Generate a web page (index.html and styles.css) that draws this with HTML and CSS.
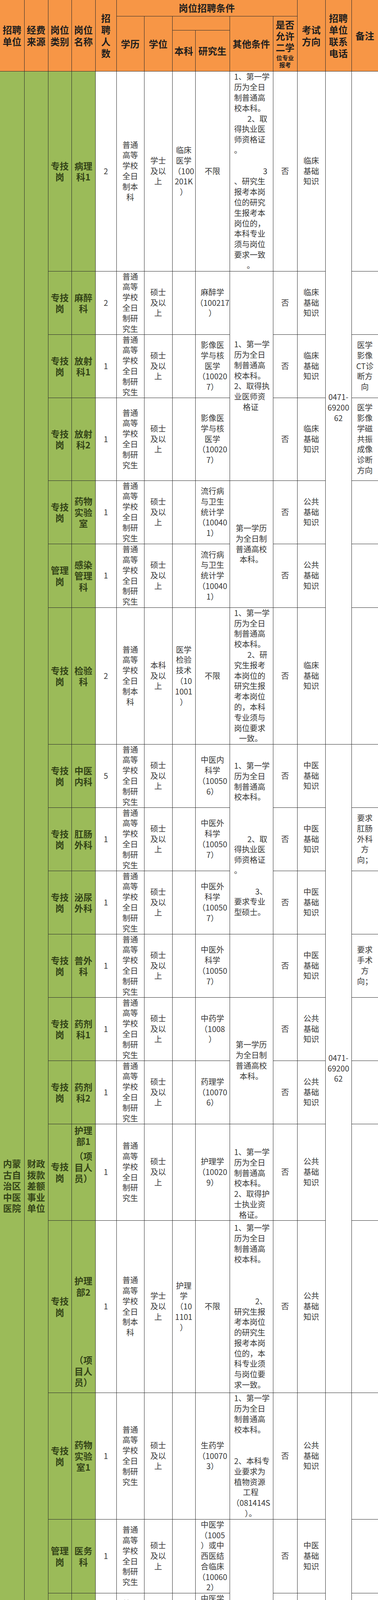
FILE: index.html
```html
<!DOCTYPE html>
<html lang="zh-CN">
<head>
<meta charset="utf-8">
<title>岗位招聘条件</title>
<link rel="stylesheet" href="styles.css">
</head>
<body>
<table class="tbl">
<colgroup>
<col class="w62"><col class="w61"><col class="w60"><col class="w61"><col class="w54"><col class="w71"><col class="w72"><col class="w59"><col class="w88"><col class="w111"><col class="w62"><col class="w72"><col class="w67"><col class="w68">
</colgroup>
<thead>
<tr class="h41">
<th rowspan="3" class="el">招聘<br>单位</th>
<th rowspan="3">经费<br>来源</th>
<th rowspan="3">岗位<br>类别</th>
<th rowspan="3">岗位<br>名称</th>
<th rowspan="3">招<br>聘<br>人<br>数</th>
<th colspan="6">岗位招聘条件</th>
<th rowspan="3">考试<br>方向</th>
<th rowspan="3">招聘<br>单位<br>联系<br>电话</th>
<th rowspan="3" class="er">备注</th>
</tr>
<tr class="h36">
<th rowspan="2">学历</th>
<th rowspan="2">学位</th>
<th colspan="2"></th>
<th rowspan="2">其他条件</th>
<th rowspan="2" class="yn">是否<br>允许<br>二学<div class="sm">位专业<br>报考</div></th>
</tr>
<tr class="h105"><th>本科</th><th>研究生</th></tr>
</thead>
<tbody>
<!-- R1 -->
<tr class="h512">
<td class="g unit el" rowspan="27">内蒙<br>古自<br>治区<br>中医<br>医院</td>
<td class="g unit" rowspan="27">财政<br>拨款<br>差额<br>事业<br>单位</td>
<td class="g">专技<br>岗</td>
<td class="g">病理<br>科1</td>
<td>2</td>
<td>普通<br>高等<br>学校<br>全日<br>制本<br>科</td>
<td>学士<br>及以<br>上</td>
<td>临床<br>医学<br>（100<br>201K<br>）</td>
<td>不限</td>
<td class="oc"><div>1、第一学</div><div>历为全日</div><div>制普通高</div><div>校本科。</div><div class="r">2、取</div><div>得执业医</div><div>师资格证</div><div>。</div><div class="b"></div><div class="r">3</div><div>、研究生</div><div>报考本岗</div><div>位的研究</div><div>生报考本</div><div>岗位的，</div><div>本科专业</div><div>须与岗位</div><div>要求一致</div><div class="c">。</div></td>
<td>否</td>
<td>临床<br>基础<br>知识</td>
<td class="tel" rowspan="7">0471-<br>69200<br>62</td>
<td></td>
</tr>
<!-- R2 -->
<tr class="h162">
<td class="g">专技<br>岗</td>
<td class="g">麻醉<br>科</td>
<td>2</td>
<td>普通<br>高等<br>学校<br>全日<br>制研<br>究生</td>
<td>硕士<br>及以<br>上</td>
<td></td>
<td>麻醉学<br>（100217<br>）</td>
<td class="oc" rowspan="3"><div>1、第一学</div><div>历为全日</div><div>制普通高</div><div>校本科。</div><div>2、取得执</div><div>业医师资</div><div class="c">格证</div></td>
<td>否</td>
<td>临床<br>基础<br>知识</td>
<td></td>
</tr>
<!-- R3 -->
<tr class="h162">
<td class="g">专技<br>岗</td>
<td class="g">放射<br>科1</td>
<td>1</td>
<td>普通<br>高等<br>学校<br>全日<br>制研<br>究生</td>
<td>硕士<br>及以<br>上</td>
<td></td>
<td>影像医<br>学与核<br>医学<br>（10020<br>7）</td>
<td>否</td>
<td>临床<br>基础<br>知识</td>
<td>医学<br>影像<br>CT诊<br>断方<br>向</td>
</tr>
<!-- R4 -->
<tr class="h212">
<td class="g">专技<br>岗</td>
<td class="g">放射<br>科2</td>
<td>1</td>
<td>普通<br>高等<br>学校<br>全日<br>制研<br>究生</td>
<td>硕士<br>及以<br>上</td>
<td></td>
<td>影像医<br>学与核<br>医学<br>（10020<br>7）</td>
<td>否</td>
<td>临床<br>基础<br>知识</td>
<td>医学<br>影像<br>学磁<br>共振<br>成像<br>诊断<br>方向</td>
</tr>
<!-- R5 -->
<tr class="h162">
<td class="g">专技<br>岗</td>
<td class="g">药物<br>实验<br>室</td>
<td>1</td>
<td>普通<br>高等<br>学校<br>全日<br>制研<br>究生</td>
<td>硕士<br>及以<br>上</td>
<td></td>
<td>流行病<br>与卫生<br>统计学<br>（10040<br>1）</td>
<td class="oc cc" rowspan="2">第一学历<br>为全日制<br>普通高校<br>本科。</td>
<td>否</td>
<td>公共<br>基础<br>知识</td>
<td></td>
</tr>
<!-- R6 -->
<tr class="h163">
<td class="g">管理<br>岗</td>
<td class="g">感染<br>管理<br>科</td>
<td>1</td>
<td>普通<br>高等<br>学校<br>全日<br>制研<br>究生</td>
<td>硕士<br>及以<br>上</td>
<td></td>
<td>流行病<br>与卫生<br>统计学<br>（10040<br>1）</td>
<td>否</td>
<td>公共<br>基础<br>知识</td>
<td></td>
</tr>
<!-- R7 -->
<tr class="h350">
<td class="g">专技<br>岗</td>
<td class="g">检验<br>科</td>
<td>2</td>
<td>普通<br>高等<br>学校<br>全日<br>制本<br>科</td>
<td>本科<br>及以<br>上</td>
<td>医学<br>检验<br>技术<br>（10<br>1001<br>）</td>
<td>不限</td>
<td class="oc"><div>1、第一学</div><div>历为全日</div><div>制普通高</div><div>校本科。</div><div class="r">2、研</div><div>究生报考</div><div>本岗位的</div><div>研究生报</div><div>考本岗位</div><div>的，本科</div><div>专业须与</div><div>岗位要求</div><div class="c">一致。</div></td>
<td>否</td>
<td>临床<br>基础<br>知识</td>
<td></td>
</tr>
<!-- R8 -->
<tr class="h162">
<td class="g">专技<br>岗</td>
<td class="g">中医<br>内科</td>
<td>5</td>
<td>普通<br>高等<br>学校<br>全日<br>制研<br>究生</td>
<td>硕士<br>及以<br>上</td>
<td></td>
<td>中医内<br>科学<br>（10050<br>6）</td>
<td class="oc" rowspan="3"><div>1、第一学</div><div>历为全日</div><div>制普通高</div><div>校本科。</div><div class="b"></div><div class="b"></div><div class="b"></div><div class="r">2、取</div><div>得执业医</div><div>师资格证</div><div>。</div><div class="b"></div><div class="r">3、</div><div>要求专业</div><div>型硕士。</div></td>
<td>否</td>
<td>中医<br>基础<br>知识</td>
<td class="tel" rowspan="8">0471-<br>69200<br>62</td>
<td></td>
</tr>
<!-- R9 -->
<tr class="h162">
<td class="g">专技<br>岗</td>
<td class="g">肛肠<br>外科</td>
<td>1</td>
<td>普通<br>高等<br>学校<br>全日<br>制研<br>究生</td>
<td>硕士<br>及以<br>上</td>
<td></td>
<td>中医外<br>科学<br>（10050<br>7）</td>
<td>否</td>
<td>中医<br>基础<br>知识</td>
<td>要求<br>肛肠<br>外科<br>方<br>向；</td>
</tr>
<!-- R10 -->
<tr class="h162">
<td class="g">专技<br>岗</td>
<td class="g">泌尿<br>外科</td>
<td>1</td>
<td>普通<br>高等<br>学校<br>全日<br>制研<br>究生</td>
<td>硕士<br>及以<br>上</td>
<td></td>
<td>中医外<br>科学<br>（10050<br>7）</td>
<td>否</td>
<td>中医<br>基础<br>知识</td>
<td></td>
</tr>
<!-- R11 -->
<tr class="h162">
<td class="g">专技<br>岗</td>
<td class="g">普外<br>科</td>
<td>1</td>
<td>普通<br>高等<br>学校<br>全日<br>制研<br>究生</td>
<td>硕士<br>及以<br>上</td>
<td></td>
<td>中医外<br>科学<br>（10050<br>7）</td>
<td class="oc"></td>
<td>否</td>
<td>中医<br>基础<br>知识</td>
<td>要求<br>手术<br>方<br>向；</td>
</tr>
<!-- R12 -->
<tr class="h162">
<td class="g">专技<br>岗</td>
<td class="g">药剂<br>科1</td>
<td>1</td>
<td>普通<br>高等<br>学校<br>全日<br>制研<br>究生</td>
<td>硕士<br>及以<br>上</td>
<td></td>
<td>中药学<br>（1008<br>）</td>
<td class="oc cc" rowspan="2">第一学历<br>为全日制<br>普通高校<br>本科。</td>
<td>否</td>
<td>公共<br>基础<br>知识</td>
<td></td>
</tr>
<!-- R13 -->
<tr class="h162">
<td class="g">专技<br>岗</td>
<td class="g">药剂<br>科2</td>
<td>1</td>
<td>普通<br>高等<br>学校<br>全日<br>制研<br>究生</td>
<td>硕士<br>及以<br>上</td>
<td></td>
<td>药理学<br>（10070<br>6）</td>
<td>否</td>
<td>公共<br>基础<br>知识</td>
<td></td>
</tr>
<!-- R14 -->
<tr class="h247">
<td class="g">专技<br>岗</td>
<td class="g top"><div>护理</div><div>部1</div><div class="gapsm">（项</div><div>目人</div><div>员）</div></td>
<td>1</td>
<td>普通<br>高等<br>学校<br>全日<br>制研<br>究生</td>
<td>硕士<br>及以<br>上</td>
<td></td>
<td>护理学<br>（10020<br>9）</td>
<td class="oc bot"><div>1、第一学</div><div>历为全日</div><div>制普通高</div><div>校本科。</div><div>2、取得护</div><div>士执业资</div><div class="c">格证。</div></td>
<td>否</td>
<td>公共<br>基础<br>知识</td>
<td></td>
</tr>
<!-- R15 -->
<tr class="h441">
<td class="g">专技<br>岗</td>
<td class="g bot pb14"><div>护理</div><div>部2</div><div class="gaplg"></div><div>（项</div><div>目人</div><div>员）</div></td>
<td>1</td>
<td>普通<br>高等<br>学校<br>全日<br>制本<br>科</td>
<td>学士<br>及以<br>上</td>
<td>护理<br>学<br>（10<br>1101<br>）</td>
<td>不限</td>
<td class="oc"><div>1、第一学</div><div>历为全日</div><div>制普通高</div><div>校本科。</div><div class="b"></div><div class="b"></div><div class="b"></div><div class="r">2、</div><div>研究生报</div><div>考本岗位</div><div>的研究生</div><div>报考本岗</div><div>位的，本</div><div>科专业须</div><div>与岗位要</div><div>求一致。</div></td>
<td>否</td>
<td>公共<br>基础<br>知识</td>
<td></td>
</tr>
<!-- R16 -->
<tr class="h324">
<td class="g">专技<br>岗</td>
<td class="g">药物<br>实验<br>室1</td>
<td>1</td>
<td>普通<br>高等<br>学校<br>全日<br>制研<br>究生</td>
<td>硕士<br>及以<br>上</td>
<td></td>
<td>生药学<br>（10070<br>3）</td>
<td class="oc"><div>1、第一学</div><div>历为全日</div><div>制普通高</div><div>校本科。</div><div class="b"></div><div class="b"></div><div>2、本科专</div><div>业要求为</div><div>植物资源</div><div class="c">工程</div><div class="code">（081414S</div><div class="c">）。</div></td>
<td>否</td>
<td>公共<br>基础<br>知识</td>
<td class="tel" rowspan="6">0471-<br>69200<br>62</td>
<td></td>
</tr>
<!-- R17 -->
<tr class="h189">
<td class="g">管理<br>岗</td>
<td class="g">医务<br>科</td>
<td>1</td>
<td>普通<br>高等<br>学校<br>全日<br>制研<br>究生</td>
<td>硕士<br>及以<br>上</td>
<td></td>
<td>中医学<br>（1005<br>）或中<br>西医结<br>合临床<br>（10060<br>2）</td>
<td class="oc cc" rowspan="5">第一学历<br>为全日制<br>普通高校<br>本科。</td>
<td>否</td>
<td>中医<br>基础<br>知识</td>
<td></td>
</tr>
<!-- R18 -->
<tr class="h189">
<td class="g">管理<br>岗</td>
<td class="g">医务<br>科<br>（项<br>目人<br>员）</td>
<td>2</td>
<td>普通<br>高等<br>学校<br>全日<br>制研<br>究生</td>
<td>硕士<br>及以<br>上</td>
<td></td>
<td>中医学<br>（1005<br>）或中<br>西医结<br>合临床<br>（10060<br>2）</td>
<td>否</td>
<td>中医<br>基础<br>知识</td>
<td></td>
</tr>
<!-- R19 -->
<tr class="h162">
<td class="g">管理<br>岗</td>
<td class="g">财务<br>科<br>（项<br>目人<br>员）</td>
<td>1</td>
<td>普通<br>高等<br>学校<br>全日<br>制研<br>究生</td>
<td>硕士<br>及以<br>上</td>
<td></td>
<td>会计学<br>（12020<br>1）</td>
<td>否</td>
<td>公共<br>基础<br>知识</td>
<td></td>
</tr>
<!-- R20 -->
<tr class="h378">
<td class="g">管理<br>岗</td>
<td class="g">党委<br>办公<br>室<br>（项<br>目人<br>员）</td>
<td>1</td>
<td>普通<br>高等<br>学校<br>全日<br>制研<br>究生</td>
<td>硕士<br>及以<br>上</td>
<td></td>
<td class="lst"><div>汉语言</div><div>文字学</div><div>（05010</div><div>3）；马</div><div>克思主</div><div>义哲学</div><div>（01010</div><div>1）；</div><div class="b"></div><div class="b"></div><div class="r">行政</div><div>管理</div><div>（12040</div><div>1）</div></td>
<td>否</td>
<td>公共<br>基础<br>知识</td>
<td>中共<br>党员</td>
</tr>
<!-- R21 -->
<tr class="h162">
<td class="g">管理<br>岗</td>
<td class="g">编辑<br>部<br>（项<br>目人<br>员）</td>
<td>1</td>
<td>普通<br>高等<br>学校<br>全日<br>制研<br>究生</td>
<td>硕士<br>及以<br>上</td>
<td></td>
<td>中医医<br>史文献<br>（10050<br>3）</td>
<td>否</td>
<td>公共<br>基础<br>知识</td>
<td></td>
</tr>
<!-- R22 -->
<tr class="h127">
<td class="g">专技<br>岗</td>
<td class="g">普外<br>科</td>
<td>1</td>
<td class="top"><div class="clip">普通<br>高等<br>学校<br>全日<br>制研<br>究生</div></td>
<td>硕士<br>及以<br>上</td>
<td></td>
<td>外科学<br>（10021<br>0）</td>
<td class="oc" rowspan="4"><div>1、第一学</div><div>历为全日</div><div>制普通高</div><div>校本科。</div><div class="r">2、取</div><div>得执业医</div><div>师资格证</div><div>。</div><div class="b"></div><div class="r">3</div><div>、研究生</div><div>报考本岗</div><div>位的研究</div><div>生报考本</div><div>岗位的，</div><div>本科专业</div><div>须与岗位</div><div>要求一致</div><div>。<span class="sp"></span>4、</div><div>要求专业</div><div class="c">型硕士</div></td>
<td>否</td>
<td>临床<br>基础<br>知识</td>
<td class="tel" rowspan="6">0471-<br>69200<br>62</td>
<td></td>
</tr>
<!-- R23 -->
<tr class="h107">
<td class="g">专技<br>岗</td>
<td class="g">中医<br>内科</td>
<td>1</td>
<td>博士<br>研究<br>生</td>
<td>博士<br>研究<br>生</td>
<td></td>
<td class="tight">中医内<br>科学<br>（10050<br>6）</td>
<td>否</td>
<td></td>
<td>脑病<br>方<br>向；</td>
</tr>
<!-- R24 -->
<tr class="h220">
<td class="g">专技<br>岗</td>
<td class="g">肛肠<br>外科</td>
<td>1</td>
<td>博士<br>研究<br>生</td>
<td>博士<br>研究<br>生</td>
<td></td>
<td>中医外<br>科学<br>（10050<br>7）中西<br>医结合<br>临床<br>（10060<br>2）</td>
<td>否</td>
<td></td>
<td></td>
</tr>
<!-- R25 -->
<tr class="h130">
<td class="g">专技<br>岗</td>
<td class="g">中医<br>妇科</td>
<td>1</td>
<td>博士<br>研究<br>生</td>
<td>博士<br>研究<br>生</td>
<td></td>
<td>中医妇<br>科学<br>（10050<br>9）</td>
<td>否</td>
<td></td>
<td></td>
</tr>
<!-- R26 -->
<tr class="h169">
<td class="g">专技<br>岗</td>
<td class="g">病理<br>科2</td>
<td>1</td>
<td>普通<br>高等<br>学校<br>全日<br>制研<br>究生</td>
<td>硕士<br>及以<br>上</td>
<td></td>
<td>病理学<br>与病理<br>生理学<br>（10010<br>4）</td>
<td class="oc"></td>
<td>否</td>
<td>临床<br>基础<br>知识</td>
<td></td>
</tr>
<!-- R27 -->
<tr class="h167">
<td class="g">管理<br>岗</td>
<td class="g">营养<br>科</td>
<td>1</td>
<td>普通<br>高等<br>学校<br>全日<br>制研<br>究生</td>
<td>硕士<br>及以<br>上</td>
<td></td>
<td>营养与<br>食品卫<br>生学<br>（10040<br>3）</td>
<td class="oc"></td>
<td>否</td>
<td>公共<br>基础<br>知识</td>
<td></td>
</tr>
</tbody>
</table>
</body>
</html>
```

FILE: styles.css
```css
html, body {
  margin: 0;
  padding: 0;
  background: #ffffff;
}

body {
  font-family: "Noto Sans CJK SC", "Noto Sans", sans-serif;
  color: #383838;
}

.tbl {
  border-collapse: collapse;
  table-layout: fixed;
  width: 968px;
}

.w62 { width: 62px; }
.w61 { width: 61px; }
.w60 { width: 60px; }
.w54 { width: 54px; }
.w71 { width: 71px; }
.w72 { width: 72px; }
.w59 { width: 59px; }
.w88 { width: 88px; }
.w111 { width: 111px; }
.w67 { width: 67px; }
.w68 { width: 68px; }

.tbl th,
.tbl td {
  border: 1px solid #2b2b2b;
  padding: 0;
  text-align: center;
  vertical-align: middle;
  white-space: nowrap;
}

/* outer edges: no frame on top, left and right */
.tbl thead tr:first-child th { border-top: none; }
.tbl .el { border-left: none; }
.tbl .er,
.tbl tbody td:last-child { border-right: none; }

.tbl th {
  background: #f79646;
  color: #1e1e1e;
  font-size: 24px;
  font-weight: 700;
  line-height: 30px;
}

.tbl th.yn {
  line-height: 29px;
}

.tbl th .sm {
  font-size: 15px;
  line-height: 18px;
  padding-top: 4px;
}

.tbl td {
  font-size: 20px;
  line-height: 26.8px;
}

.tbl td.g {
  background: #9bbb59;
  color: #344418;
  font-size: 23px;
  font-weight: 700;
  line-height: 28.4px;
}

.tbl td.oc {
  text-align: left;
  padding-left: 11px;
  padding-right: 14px;
  line-height: 26.8px;
}

.tbl td.oc.cc {
  text-align: center;
  padding-left: 0;
  padding-right: 0;
}

.tbl td.tight {
  line-height: 26.2px;
}

.oc .r { text-align: right; }
.oc .c { text-align: center; }
.lst .r { text-align: right; }
.oc .b,
.lst .b { height: 26.8px; }
.oc .code { margin-left: -6px; }
.oc .sp { display: inline-block; width: 34px; }

.tbl td.top { vertical-align: top; }
.tbl td.bot { vertical-align: bottom; }
.tbl td.g.top { padding-top: 1px; }
.tbl td.pb14 { padding-bottom: 12px; }

.gapsm { margin-top: 10px; }
.gaplg { height: 146px; }

.clip {
  height: 124px;
  overflow: hidden;
  padding-top: 1px;
}

.h41 { height: 41px; }
.h36 { height: 36px; }
.h105 { height: 105px; }
.h512 { height: 512px; }
.h162 { height: 162px; }
.h163 { height: 163px; }
.h212 { height: 212px; }
.h350 { height: 350px; }
.h247 { height: 247px; }
.h441 { height: 441px; }
.h324 { height: 324px; }
.h189 { height: 189px; }
.h378 { height: 378px; }
.h127 { height: 127px; }
.h107 { height: 107px; }
.h220 { height: 220px; }
.h130 { height: 130px; }
.h169 { height: 169px; }
.h167 { height: 167px; }
```
